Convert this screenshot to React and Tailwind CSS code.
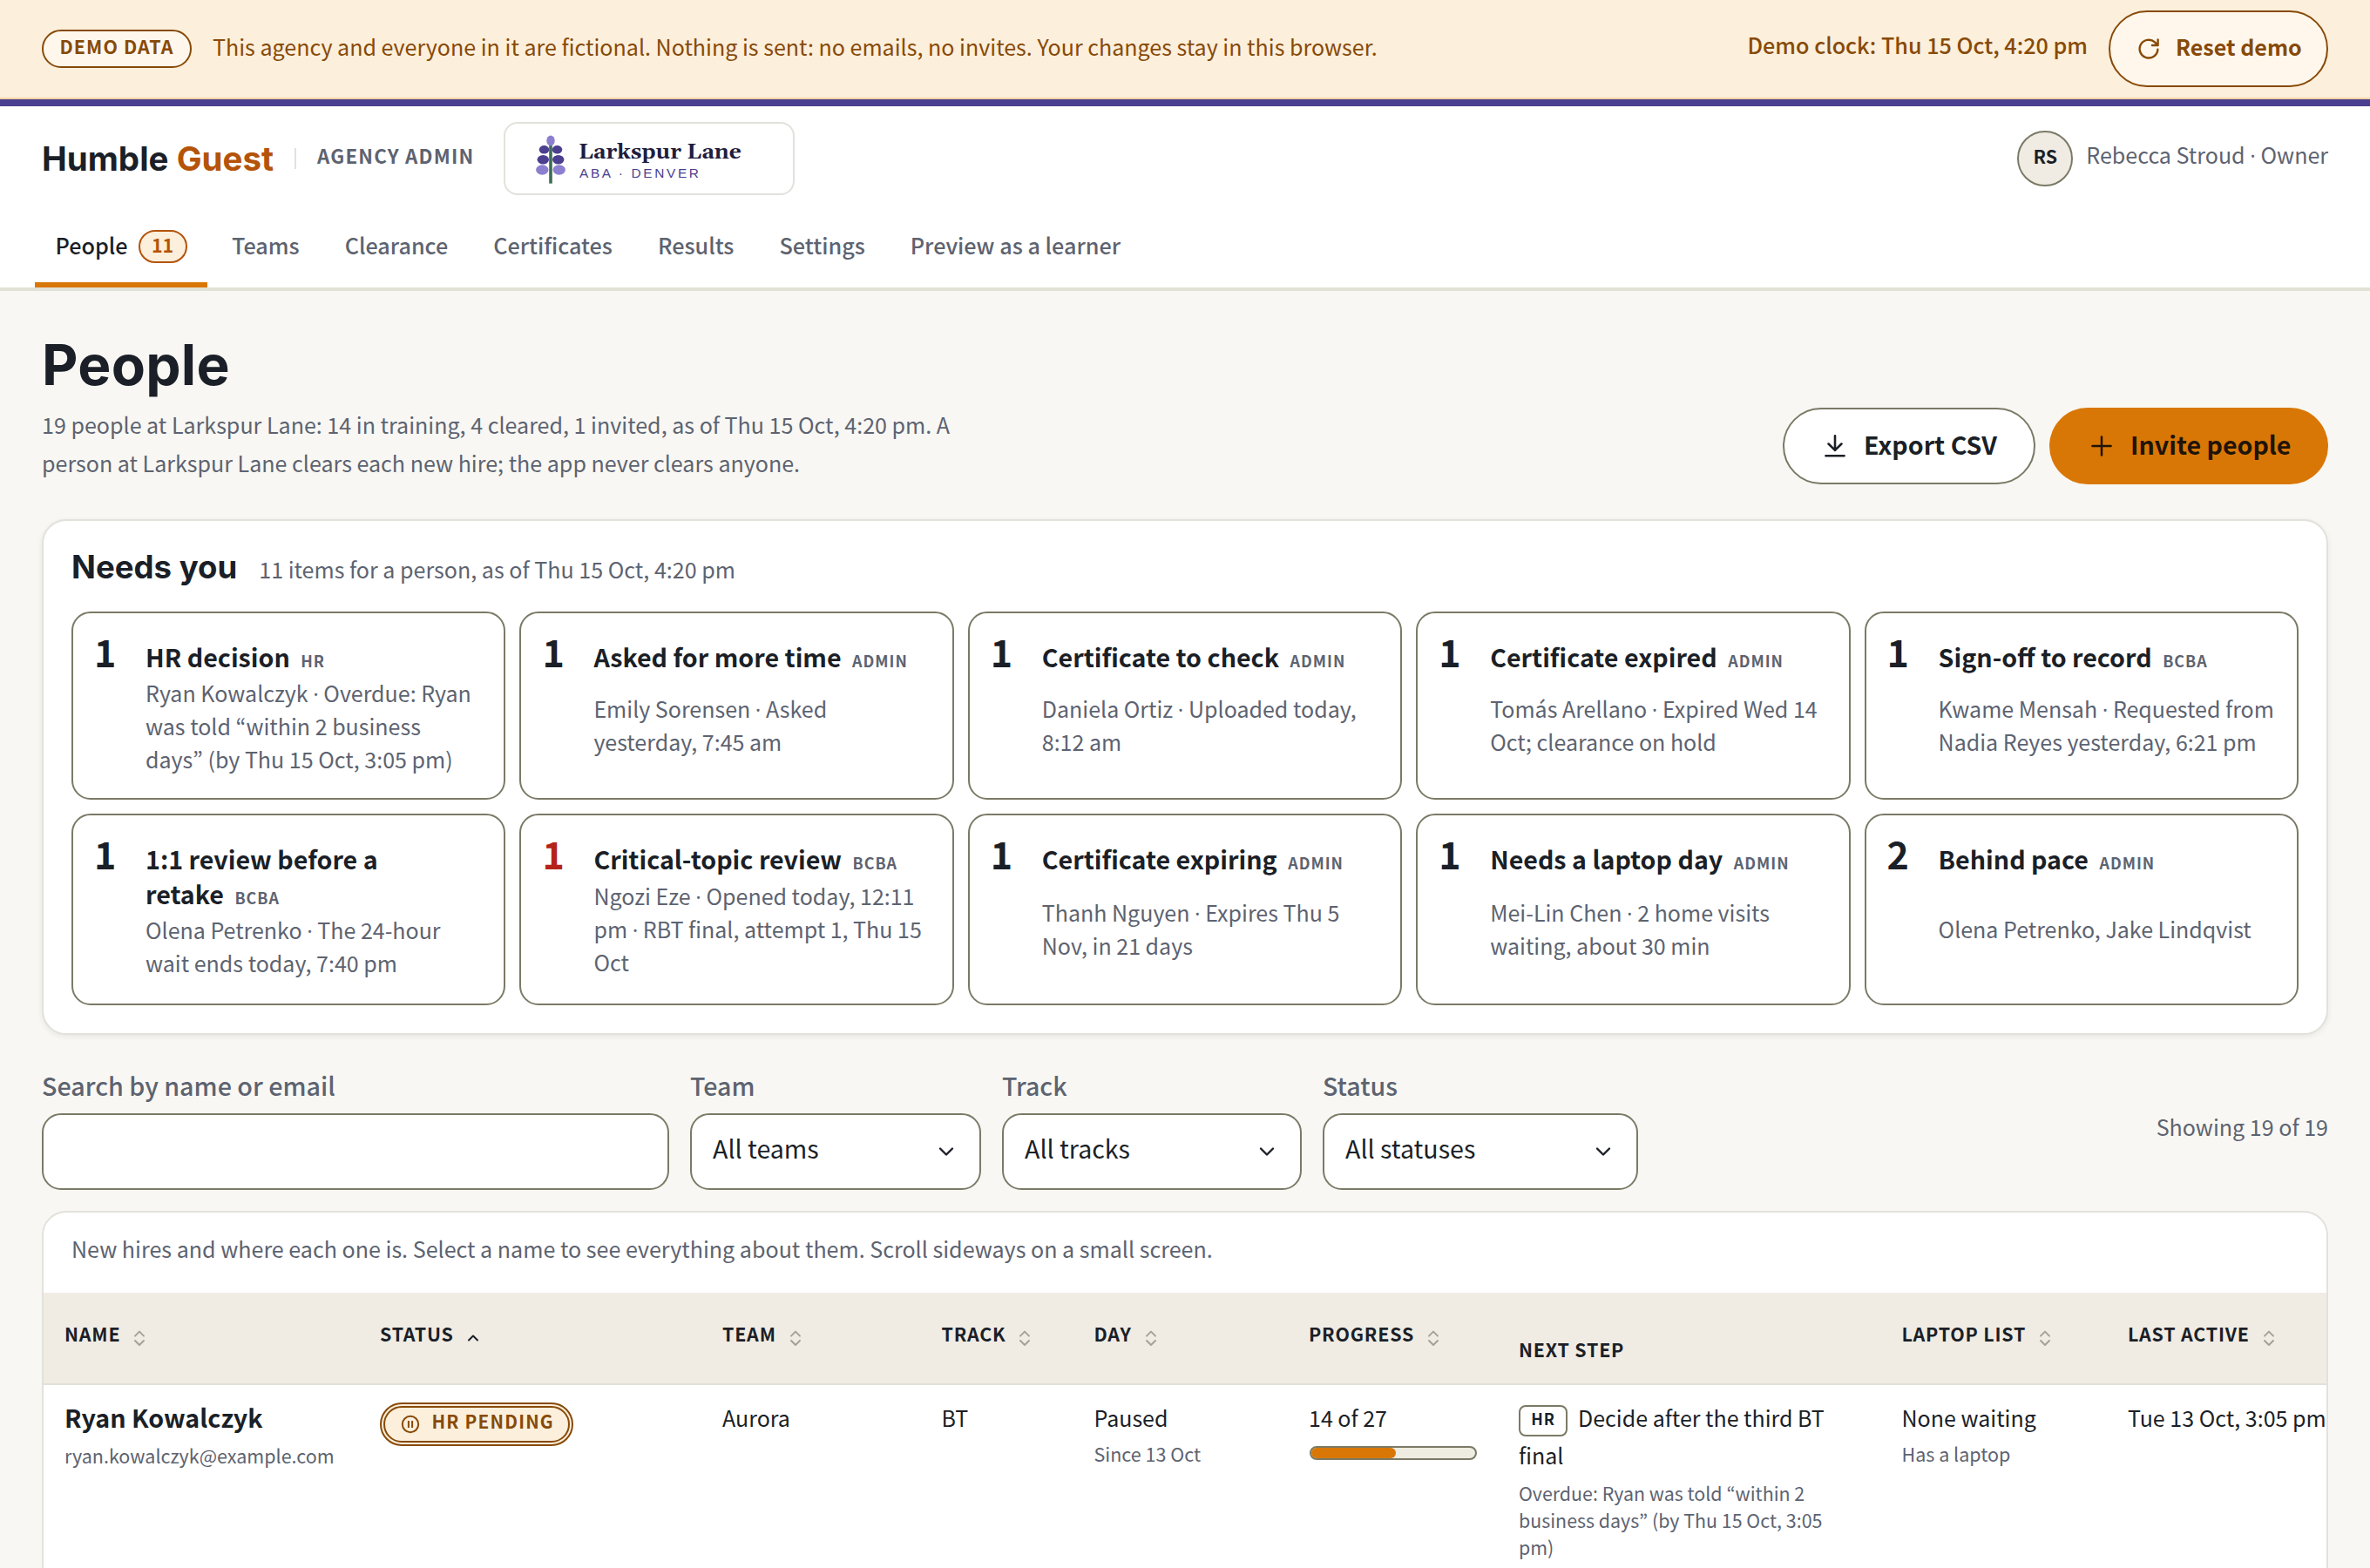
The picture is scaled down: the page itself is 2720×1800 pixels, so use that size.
import React from "react";

const needs = [
  { n: 1, title: "HR decision", tag: "HR", text: "Ryan Kowalczyk · Overdue: Ryan was told “within 2 business\ndays” (by Thu 15 Oct, 3:05 pm)" },
  { n: 1, title: "Asked for more time", tag: "ADMIN", text: "Emily Sorensen · Asked yesterday, 7:45 am" },
  { n: 1, title: "Certificate to check", tag: "ADMIN", text: "Daniela Ortiz · Uploaded today, 8:12 am" },
  { n: 1, title: "Certificate expired", tag: "ADMIN", text: "Tomás Arellano · Expired Wed 14 Oct; clearance on hold" },
  { n: 1, title: "Sign-off to record", tag: "BCBA", text: "Kwame Mensah · Requested from Nadia Reyes yesterday, 6:21 pm" },
  { n: 1, title: "1:1 review before a retake", tag: "BCBA", text: "Olena Petrenko · The 24-hour wait ends today, 7:40 pm" },
  { n: 1, title: "Critical-topic review", tag: "BCBA", text: "Ngozi Eze · Opened today, 12:11 pm · RBT final, attempt 1, Thu 15 Oct", critical: true },
  { n: 1, title: "Certificate expiring", tag: "ADMIN", text: "Thanh Nguyen · Expires Thu 5 Nov, in 21 days" },
  { n: 1, title: "Needs a laptop day", tag: "ADMIN", text: "Mei-Lin Chen · 2 home visits waiting, about 30 min" },
  { n: 2, title: "Behind pace", tag: "ADMIN", text: "Olena Petrenko, Jake Lindqvist" },
];

const tabs = ["Teams", "Clearance", "Certificates", "Results", "Settings", "Preview as a learner"];

const columns = [
  ["Name", "both"],
  ["Status", "up"],
  ["Team", "both"],
  ["Track", "both"],
  ["Day", "both"],
  ["Progress", "both"],
  ["Next step", null],
  ["Laptop list", "both"],
  ["Last active", "both"],
];

const gridCols = "grid grid-cols-[362px_393px_251.5px_175px_246.5px_241px_439.5px_259.5px_1fr]";

// Sets each middle dot in a face whose dot is narrow.
function Dotted({ text }) {
  return text.split("·").map((part, i) => (
    <React.Fragment key={i}>
      {i > 0 && <span className="font-['Open_Sans',sans-serif] leading-none">·</span>}
      {part}
    </React.Fragment>
  ));
}

function Icon({ size, width = 1.3, children }) {
  return (
    <svg width={size} height={size} viewBox="0 0 16 16" fill="none" stroke="currentColor" strokeWidth={width} strokeLinecap="round" strokeLinejoin="round" className="shrink-0">
      {children}
    </svg>
  );
}

function SortIcon({ kind }) {
  return (
    <svg width="20" height="20" viewBox="0 0 20 20" fill="none" strokeWidth="2" strokeLinecap="round" strokeLinejoin="round" className={kind === "up" ? "mt-[11px] shrink-0 text-[#1b1f27]" : "mt-[11px] shrink-0 text-[#a3a19b]"} stroke="currentColor">
      {kind === "up" ? <path d="M5 12.5l5-5 5 5" /> : <path d="M5 7.6l5-5 5 5M5 13l5 5 5-5" />}
    </svg>
  );
}

function NeedCard({ item }) {
  return (
    <div className="grid grid-cols-[59px_1fr] rounded-[22px] border-2 border-[#7b7a66] bg-white pt-[29.5px] pr-[23px] pb-[27px] pl-6">
      <span className={item.critical ? "-mt-[7px] text-[43px] leading-[40px] font-bold text-[#b42318]" : "-mt-[7px] text-[43px] leading-[40px] font-bold"}>{item.n}</span>
      <span className="text-[28.65px] leading-[40px] font-bold">
        {item.title}
        {"\u00a0"}
        <span className="ml-1.5 text-[17.9px] leading-none font-bold tracking-[1px] text-[#5d6370]">{item.tag}</span>
      </span>
      <span className="col-start-2 pt-[2px] text-[25px] leading-[38px] whitespace-pre-line text-[#5d6370]">
        <Dotted text={item.text} />
      </span>
    </div>
  );
}

function Select({ label, value, className }) {
  return (
    <div className={className}>
      <div className="text-[28.6px] leading-[40px] font-medium text-[#5d6370]">{label}</div>
      <div className="mt-3 flex h-[88px] items-center justify-between rounded-[22px] border-2 border-[#7b7a66] bg-white pr-[24px] pl-6">
        <span className="pb-2 text-[28.6px]">{value}</span>
        <svg width="28" height="28" viewBox="0 0 28 28" fill="none" stroke="currentColor" strokeWidth="2.4" strokeLinecap="round" strokeLinejoin="round">
          <path d="M7 10.5l7 7 7-7" />
        </svg>
      </div>
    </div>
  );
}

function Cell({ children, className = "" }) {
  return <div className={"pl-6 pt-4 text-[25px] leading-[42px] " + className}>{children}</div>;
}

function Small({ children }) {
  return <div className="mt-[5px] text-[21.5px] leading-[32px] text-[#5d6370]">{children}</div>;
}

function Logo() {
  return (
    <div className="h-[84px] w-[334px] rounded-2xl border-2 border-[#e2e1dc] bg-white">
      <svg width="330" height="80" viewBox="0 0 330 80">
        <rect x="50.2" y="24" width="3.6" height="44.6" fill="#3f6b57" />
        <ellipse cx="52" cy="19.5" rx="4.7" ry="6" fill="#8b7fd0" />
        <ellipse cx="44.5" cy="29.8" rx="5.8" ry="4.8" fill="#4b3f8f" />
        <ellipse cx="59.5" cy="29.8" rx="5.8" ry="4.8" fill="#4b3f8f" />
        <ellipse cx="43.3" cy="41.3" rx="6.7" ry="5.3" fill="#4b3f8f" />
        <ellipse cx="60.7" cy="41.3" rx="6.7" ry="5.3" fill="#4b3f8f" />
        <ellipse cx="42.3" cy="53" rx="7.2" ry="5.7" fill="#8b7fd0" />
        <ellipse cx="61.7" cy="53" rx="7.2" ry="5.7" fill="#8b7fd0" />
        <text x="84" y="39.7" fill="#221c3d" className="font-[Gelasio,'DejaVu_Serif',serif] text-[24.6px] font-bold">Larkspur Lane</text>
        <text x="85" y="61.7" fill="#4b3f8f" className="font-['Liberation_Sans',sans-serif] text-[15.4px] tracking-[2.65px]">ABA · DENVER</text>
      </svg>
    </div>
  );
}

export default function App() {
  return (
    <div className="h-[1800px] w-[2720px] overflow-hidden bg-[#f8f7f3] font-['Noto_Sans_CJK_KR','Open_Sans',sans-serif] text-[#1b1f27]">
      <div className="flex h-[114px] items-center border-b-2 border-[#f3d3a3] bg-[#fcefdb] px-12 text-[25.06px] text-[#874a08]">
        <span className="flex h-[44px] w-[172px] items-center justify-center rounded-full border-2 border-[#874a08] bg-[#fff7ec] pb-[6px] text-[21.4px] font-bold tracking-[1.1px]">DEMO DATA</span>
        <span className="ml-6 pb-[5px]">This agency and everyone in it are fictional. Nothing is sent: no emails, no invites. Your changes stay in this browser.</span>
        <span className="ml-auto pb-[8px] text-[25.15px] font-medium">Demo clock: Thu 15 Oct, 4:20 pm</span>
        <button className="ml-6 flex h-[88px] w-[252px] items-center gap-[15px] rounded-full border-2 border-[#874a08] bg-[#fff7ec] pl-[28px] font-bold">
          <Icon size={32} width={1.2}>
            <path d="M13.2 8.4a5.2 5.2 0 1 1-1.7-4.2l1.6 1.6M13.3 2.7v3.3h-3.3" />
          </Icon>
          <span className="pb-[4px]">Reset demo</span>
        </button>
      </div>

      <header className="h-[220px] border-t-8 border-b-4 border-t-[#4b3f8f] border-b-[#e1e1d6] bg-white">
        <div className="flex items-center px-12 pt-[18px]">
          <div className="w-[290px] font-['Inter',sans-serif] text-[38.5px] leading-[48px] font-bold whitespace-nowrap">
            Humble <span className="text-[#b45309]">Guest</span>
          </div>
          <div className="h-6 w-[2px] bg-[#e2e1dc]" />
          <div className="ml-6 w-[214px] pb-[7px] text-[22.3px] font-bold tracking-[1.2px] whitespace-nowrap text-[#5d6370]">AGENCY ADMIN</div>
          <Logo />
          <div className="ml-auto flex h-16 w-16 items-center justify-center rounded-full border-2 border-[#7b7a66] bg-[#f0ece4] pb-[6px] text-[21.4px] font-bold">RS</div>
          <span className="ml-[15px] pb-[8px] text-[25.06px] text-[#5d6370]">
            <Dotted text="Rebecca Stroud · Owner" />
          </span>
        </div>
        <nav className="mt-3 flex gap-1 px-10 text-[25.2px] font-medium text-[#5d6370]">
          <div className="flex h-[94px] items-center gap-[12px] border-b-6 border-[#d97706] px-[23.5px] pt-[6px] text-[#1b1f27]">
            <span className="pb-0.5">People</span>
            <span className="flex h-[38px] w-[56px] items-center justify-center rounded-full border-2 border-[#b45309] bg-[#fcefdb] pb-[4px] text-[21.4px] font-bold text-[#b45309]">11</span>
          </div>
          {tabs.map((t) => (
            <div key={t} className="flex h-[94px] items-center px-6 pb-0.5">{t}</div>
          ))}
        </nav>
      </header>

      <main className="px-12 pt-[49px]">
        <div className="flex items-end justify-between">
          <div className="w-[1060px] pb-[3px]">
            <h1 className="font-['Inter',sans-serif] text-[64px] leading-[72px] font-bold tracking-[0.3px]">People</h1>
            <p className="mt-[10px] text-[25.06px] leading-[44px] text-[#5d6370]">
              19 people at Larkspur Lane: 14 in training, 4 cleared, 1 invited, as of Thu 15 Oct, 4:20 pm. A person at Larkspur Lane clears each new hire; the app never clears anyone.
            </p>
          </div>
          <div className="flex gap-4 text-[28.6px] font-bold">
            <button className="flex h-[88px] w-[290px] items-center gap-[15px] rounded-full border-2 border-[#7b7a66] bg-white pl-[40px]">
              <Icon size={36} width={1.15}>
                <path d="M8 2.8v7.4M4.7 6.9L8 10.2l3.3-3.3M3.3 13h9.4" />
              </Icon>
              <span className="pb-[4px]">Export CSV</span>
            </button>
            <button className="flex h-[88px] w-[320px] items-center gap-[15px] rounded-full bg-[#d97706] pl-[42px] text-[#1f1408]">
              <Icon size={36} width={1.1}>
                <path d="M3.3 8h9.4M8 3.3v9.4" />
              </Icon>
              <span className="pb-[4px]">Invite people</span>
            </button>
          </div>
        </div>

        <section className="mt-10 rounded-[28px] border-2 border-[#e2e1dc] bg-white px-8 pt-[29px] pb-8 shadow-[0_2px_6px_rgba(28,33,43,0.08)]">
          <div className="flex items-baseline gap-[25px]">
            <h2 className="font-['Inter',sans-serif] text-[36.6px] leading-[48px] font-bold">Needs you</h2>
            <span className="text-[25.06px] leading-none text-[#5d6370]">11 items for a person, as of Thu 15 Oct, 4:20 pm</span>
          </div>
          <div className="mt-[27px] grid grid-cols-5 grid-rows-[216px_220px] gap-4">
            {needs.map((item) => (
              <NeedCard key={item.title} item={item} />
            ))}
          </div>
        </section>

        <div className="mt-[38px] flex items-end gap-6">
          <div className="w-[720px]">
            <div className="text-[28.7px] leading-[40px] font-medium text-[#5d6370]">Search by name or email</div>
            <div className="mt-3 h-[88px] rounded-[22px] border-2 border-[#7b7a66] bg-white" />
          </div>
          <Select label="Team" value="All teams" className="w-[334px]" />
          <Select label="Track" value="All tracks" className="w-[344px]" />
          <Select label="Status" value="All statuses" className="w-[362px]" />
          <span className="ml-auto pb-[51px] text-[25.06px] leading-[44px] text-[#5d6370]">Showing 19 of 19</span>
        </div>

        <section className="mt-6 h-[480px] overflow-hidden rounded-[28px] border-2 border-[#e2e1dc] bg-white">
          <div className="flex h-[92px] items-center pb-[8px] pl-8 text-[25.07px] text-[#5d6370]">
            New hires and where each one is. Select a name to see everything about them. Scroll sideways on a small screen.
          </div>
          <div className={gridCols + " h-[106px] border-b-2 border-[#e1e0d9] bg-[#f0ece4]"}>
            {columns.map(([label, sort]) => (
              <div key={label} className={sort ? "flex items-start gap-3 pt-[31px] pl-6" : "flex items-start pt-[49px] pl-6"}>
                <span className="text-[21.4px] leading-[32px] font-bold tracking-[0.8px] uppercase">{label}</span>
                {sort && <SortIcon kind={sort} />}
              </div>
            ))}
          </div>
          <div className={gridCols}>
            <div className="pt-[15px] pl-6">
              <div className="text-[28.65px] leading-[44px] font-bold">Ryan Kowalczyk</div>
              <div className="mt-1.5 text-[21.5px] leading-[32px] text-[#5d6370]">ryan.kowalczyk@example.com</div>
            </div>
            <div className="pt-5 pl-6">
              <div className="flex h-[50px] w-[222px] items-center gap-[12.5px] rounded-full border-6 border-double border-[#874a08] bg-[#fcefdb] pl-[17px] text-[#874a08]">
                <svg width="24" height="24" viewBox="0 0 24 24" fill="none" stroke="currentColor" strokeWidth="2" className="shrink-0">
                  <circle cx="12" cy="12" r="9.2" />
                  <path d="M9.9 8v8M14.1 8v8" />
                </svg>
                <span className="pb-[8px] text-[20.7px] leading-none font-bold tracking-[1.2px] whitespace-nowrap">HR PENDING</span>
              </div>
            </div>
            <Cell>Aurora</Cell>
            <Cell>BT</Cell>
            <Cell>
              Paused
              <Small>Since 13 Oct</Small>
            </Cell>
            <Cell>
              14 of 27
              <div className="mt-3 ml-[1px] h-4 w-48 overflow-hidden rounded-full border-2 border-[#7b7a66] bg-[#efece1]">
                <div className="h-full rounded-r-full bg-[#d97706]" style={{ width: `${(14 / 27) * 100}%` }} />
              </div>
            </Cell>
            <Cell>
              <div className="w-[376px]">
                <span className="mr-3 inline-flex h-9 w-14 items-center justify-center rounded-lg border-2 border-[#7b7a66] bg-white pb-[5px] align-middle text-[17.9px] leading-none font-bold tracking-[1px]">HR</span>
                Decide after the third BT final
                <div className="mt-[7px] text-[21.4px] leading-[31px] text-[#5d6370]">Overdue: Ryan was told “within 2 business days” (by Thu 15 Oct, 3:05 pm)</div>
              </div>
            </Cell>
            <Cell>
              None waiting
              <Small>Has a laptop</Small>
            </Cell>
            <Cell className="whitespace-nowrap">Tue 13 Oct, 3:05 pm</Cell>
          </div>
        </section>
      </main>
    </div>
  );
}
